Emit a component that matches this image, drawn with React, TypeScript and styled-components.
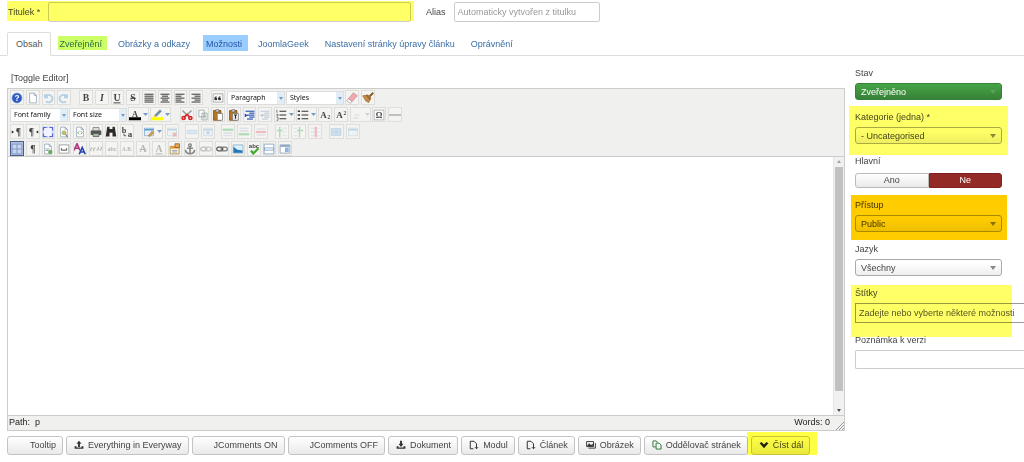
import React from "react";
import styled, { createGlobalStyle, css } from "styled-components";

const Global = createGlobalStyle`
  *, *::before, *::after { box-sizing: border-box; }
  body {
    margin: 0;
    overflow-x: hidden;
    background: #fff;
    color: #444;
    font: 9px/12px "Liberation Sans", Arial, sans-serif;
  }
  button, input, select, textarea { font: inherit; color: inherit; margin: 0; }
`;

const Page = styled.main`
  padding-top: 2px;
`;

/* Translucent marker pen laid over a control */
const Marker = styled.span<{ $inset: string; $color: string }>`
  position: absolute;
  inset: ${(p) => p.$inset};
  background: ${(p) => p.$color};
  mix-blend-mode: multiply;
  pointer-events: none;
`;

const TitleBar = styled.div`
  display: flex;
  align-items: center;
  padding-left: 8px;
`;

const TitleField = styled.div<{ $width: string }>`
  position: relative;
  display: flex;
  align-items: center;
  gap: 8px;
  width: ${(p) => p.$width};
  margin-right: 15px;
  white-space: nowrap;
`;

const TextInput = styled.input`
  flex: 1;
  min-width: 0;
  width: 100%;
  height: 20px;
  padding: 0 3px;
  border: 1px solid #ccc;
  border-radius: 2px;
  background: #fff;
  &::placeholder { color: #999; opacity: 1; }
`;

const Tabs = styled.nav`
  display: flex;
  height: 34px;
  margin-bottom: 11px;
  padding: 10px 0 0 7px;
  border-bottom: 1px solid #ddd;
`;

const Tab = styled.a<{ $active?: boolean }>`
  position: relative;
  height: 24px;
  padding: 6px 8px;
  color: #3a6ea5;
  text-decoration: none;
  white-space: nowrap;
  ${(p) =>
    p.$active &&
    css`
      padding: 5px 7px 5px 8px;
      margin-right: 1px;
      border: 1px solid #ddd;
      border-bottom-color: #fff;
      border-radius: 2px 2px 0 0;
      background: #fff;
      color: #555;
    `}
`;

const Content = styled.div`
  display: flex;
  align-items: flex-start;
  gap: 10px;
  padding-left: 7px;
`;

const EditorColumn = styled.section`
  flex: 1;
  min-width: 0;
`;

const ToggleLink = styled.button`
  display: block;
  height: 12px;
  margin: 5px 0 4px;
  padding: 0 4px;
  border: 0;
  background: none;
`;

const Editor = styled.div`
  border: 1px solid #ccc;
  background: #fff;
`;

const Toolbar = styled.div`
  padding: 0 1px;
  height: 68px;
  background: #f0f0ee;
  border-bottom: 1px solid #ccc;
  color: #222;
`;

const ToolRow = styled.div`
  display: flex;
  height: 17px;
  align-items: center;
`;

const ToolGroup = styled.div<{ $width: number; $before?: number }>`
  display: flex;
  flex: none;
  width: ${(p) => p.$width}px;
  margin-left: ${(p) => p.$before ?? 0}px;
`;

const ToolButton = styled.button<{ $off?: boolean; $on?: boolean }>`
  flex: 1 1 0;
  min-width: 0;
  height: 15px;
  margin: 0 1px;
  padding: 0;
  display: flex;
  align-items: center;
  justify-content: center;
  border: 1px solid ${(p) => (p.$on ? "#4a5c8c" : "#dededb")};
  background: ${(p) => (p.$on ? "#b4c2dd" : "#f4f4f2")};
  svg { flex: none; opacity: ${(p) => (p.$off ? 0.35 : 1)}; }
`;

const ToolSelectBox = styled.span`
  position: relative;
  flex: none;
  width: 58px;
  height: 14px;
  margin: 0 0 0 1px;
`;

const ToolSelect = styled.select`
  appearance: none;
  display: block;
  width: 100%;
  height: 14px;
  padding: 0 3px;
  border: 1px solid #ddd;
  background: linear-gradient(to right, #fff calc(100% - 7px), #e3edf5 calc(100% - 7px));
  color: #111;
  font: 7px/12px "Noto Sans", "Open Sans", sans-serif;
`;

const SelectTick = styled.span<{ $color: string; $right: number }>`
  position: absolute;
  top: 50%;
  right: ${(p) => p.$right}px;
  margin-top: -2px;
  border: 3px solid transparent;
  border-top: 4px solid ${(p) => p.$color};
  border-bottom: 0;
  pointer-events: none;
`;

const ToolTick = styled(SelectTick)`
  border-width: 3px 2px 0;
  margin-top: -1px;
`;

const Canvas = styled.div`
  display: flex;
  height: 258px;
`;

const WritingArea = styled.textarea`
  flex: 1;
  padding: 6px;
  border: 0;
  outline: 0;
  resize: none;
`;

const Scrollbar = styled.div`
  display: flex;
  flex-direction: column;
  align-items: center;
  width: 11px;
  padding: 3px 0;
  background: #f1f1f1;
  border-left: 1px solid #e6e6e6;
`;

const ScrollThumb = styled.div`
  flex: 1;
  width: 8px;
  margin: 4px 0 18px;
  background: #c1c1c1;
`;

const ScrollArrow = styled.i<{ $down?: boolean }>`
  border: 2px solid transparent;
  ${(p) =>
    p.$down
      ? "border-top: 3px solid #505050; border-bottom: 0;"
      : "border-bottom: 3px solid #a3a3a3; border-top: 0;"}
`;

const StatusBar = styled.div`
  display: flex;
  justify-content: space-between;
  height: 15px;
  padding: 0 0 0 1px;
  border-top: 1px solid #ccc;
  background: #f0f0ee;
  color: #222;
`;

const WordCount = styled.span`
  display: flex;
  align-items: flex-start;
  gap: 6px;
  svg { align-self: flex-end; }
`;

const InsertBar = styled.div`
  display: flex;
  flex-wrap: wrap;
  gap: 3px;
  margin-top: 5px;
`;

const InsertButton = styled.button<{ $indent?: number }>`
  position: relative;
  display: flex;
  align-items: center;
  gap: 4px;
  height: 19px;
  padding: 0 6px 1px ${(p) => p.$indent ?? 7}px;
  border: 1px solid #c4c4c4;
  border-radius: 3px;
  background: linear-gradient(#fff, #e9e9e9);
  white-space: nowrap;
`;

const Aside = styled.aside`
  flex: 0 0 169px;
  display: flex;
  flex-direction: column;
  gap: 11px;
`;

const Field = styled.div<{ $full?: boolean }>`
  position: relative;
  display: flex;
  flex-direction: column;
  gap: 4px;
  width: ${(p) => (p.$full ? "100%" : "147px")};
`;

const SelectBox = styled.span`
  position: relative;
  display: block;
`;

const Select = styled.select<{ $green?: boolean }>`
  appearance: none;
  display: block;
  width: 100%;
  height: 17px;
  padding: 0 5px;
  border: 1px solid ${(p) => (p.$green ? "#378137" : "#aaa")};
  border-radius: 3px;
  background: ${(p) =>
    p.$green ? "linear-gradient(#46a546, #378137)" : "linear-gradient(#fff 20%, #eee)"};
  color: ${(p) => (p.$green ? "#fff" : "#444")};
`;

const Switch = styled.fieldset`
  display: flex;
  width: 147px;
  margin: 0;
  padding: 0;
  border: 0;
  legend { padding: 0; margin-bottom: 6px; }
`;

const SwitchOption = styled.label<{ $chosen?: boolean }>`
  flex: 1;
  height: 15px;
  line-height: 13px;
  text-align: center;
  border: 1px solid ${(p) => (p.$chosen ? "#802020" : "#bbb")};
  border-radius: ${(p) => (p.$chosen ? "0 3px 3px 0" : "3px 0 0 3px")};
  background: ${(p) => (p.$chosen ? "#942a25" : "linear-gradient(#fff, #e9e9e9)")};
  color: ${(p) => (p.$chosen ? "#fff" : "#444")};
  input { position: absolute; opacity: 0; pointer-events: none; }
`;

const WideInput = styled(TextInput)<{ $dark?: boolean }>`
  flex: none;
  border-right: 0;
  border-color: ${(p) => (p.$dark ? "#999" : "#ccc")};
  border-radius: ${(p) => (p.$dark ? "0" : "2px 0 0 2px")};
  height: ${(p) => (p.$dark ? 20 : 19)}px;
  &::placeholder { color: ${(p) => (p.$dark ? "#555" : "#999")}; }
`;

/* ---- toolbar drawings, on a 16 unit grid ---- */

const letter = (t: string, extra: React.SVGProps<SVGTextElement> = {}) => (
  <text x="8" y="12.5" textAnchor="middle" fontFamily="Liberation Serif, serif" fontSize="13" fontWeight="bold" fill="#444" {...extra}>
    {t}
  </text>
);
const lines = (xs: number[][], color = "#555") => (
  <g stroke={color} strokeWidth="1.6">
    {xs.map(([a, b], i) => (
      <path key={i} d={`M${a} ${3 + i * 2.6}H${b}`} />
    ))}
  </g>
);
const sheet = <path d="M3.5 1.5h6l3 3v10h-9z M9.5 1.5v3h3" fill="#fff" stroke="#8ea0b0" />;
const grid = (
  <>
    <path d="M2 3h12v10H2z" fill="#e5f1fa" stroke="#7aa7cc" />
    <path d="M2 5h12" stroke="#5c9bd0" strokeWidth="2" />
  </>
);
const clip = (
  <>
    <path d="M2 2h10v13H2z" fill="#b9741f" stroke="#7c4a10" />
    <path d="M5 1h4v3H5z" fill="#ddd" stroke="#666" />
  </>
);

const art: Record<string, React.ReactNode> = {
  help: (
    <>
      <circle cx="8" cy="8" r="6.5" fill="#2c5bc4" stroke="#5c7fce" />
      {letter("?", { fill: "#fff", fontSize: 11, y: 12, fontFamily: "Liberation Sans" })}
    </>
  ),
  page: sheet,
  undo: <path d="M4 3v4h4M4.500 6.500a5 5 0 1 1 1 6" fill="none" stroke="#3d8fd0" strokeWidth="2.500" />,
  redo: <path d="M12 3v4H8M11.500 6.500a5 5 0 1 0-1 6" fill="none" stroke="#3d8fd0" strokeWidth="2.500" />,
  bold: letter("B"),
  italic: letter("I", { fontStyle: "italic" }),
  underline: letter("U", { textDecoration: "underline" }),
  strike: letter("S", { textDecoration: "line-through" }),
  full: lines([[2, 14], [2, 14], [2, 14], [2, 14], [2, 14]]),
  center: lines([[2, 14], [4, 12], [2, 14], [4, 12], [2, 14]]),
  left: lines([[2, 14], [2, 10], [2, 14], [2, 10], [2, 14]]),
  right: lines([[2, 14], [6, 14], [2, 14], [6, 14], [2, 14]]),
  quote: (
    <>
      <path d="M1.500 2.500h13v11h-13z" fill="#fafafa" stroke="#999" />
      <path d="M7 5Q3 6 3 9a2 2 0 1 0 2-2zM12 5Q8 6 8 9a2 2 0 1 0 2-2z" fill="#333" />
    </>
  ),
  eraser: (
    <g stroke="#a88" strokeWidth=".8">
      <path d="M10 1 15 5 8 13 3 9z" fill="#f3a7ae" />
      <path d="M3 9 8 13 6 15 1 12z" fill="#fff" />
    </g>
  ),
  broom: (
    <>
      <path d="M15 1 9 7" stroke="#8a5a20" strokeWidth="2.500" />
      <path d="M1 5 8 4 12 8 9 14 5 12z" fill="#c48a45" stroke="#9d7240" />
      <path d="M6 4 11 10" stroke="#7b5a32" strokeWidth="1.500" />
    </>
  ),
  fore: (
    <>
      {letter("A", { y: 10, fontSize: 11 })}
      <path d="M0 11h16v4H0z" fill="#000" />
    </>
  ),
  back: (
    <>
      <path d="M5 8 12 1l2 2-7 7z" fill="#6a8fb5" stroke="#777" strokeWidth=".6" />
      <path d="M3 10 5 8l2 2z" fill="#e6a800" />
      <path d="M0 11h16v4H0z" fill="#ff0" />
    </>
  ),
  cut: (
    <>
      <path d="M2 2 12 12M14 2 4 12" stroke="#999" strokeWidth="2" />
      <g fill="none" stroke="#d22" strokeWidth="2.200"><circle cx="3.500" cy="12" r="2" /><circle cx="12.500" cy="12" r="2" /></g>
      <path d="M5 10 8 7l3 3" stroke="#d22" strokeWidth="2" fill="none" />
    </>
  ),
  copy: <path d="M2.500 1.500h7v9h-7zM6.500 5.500h7v9h-7zM8 8h4M8 10h4M8 12h4" fill="#fff" stroke="#8aa09a" />,
  paste: <>{clip}<path d="M7 6h7v9H7z" fill="#fff" stroke="#777" /></>,
  pasteText: <>{clip}<path d="M6 6h8v9H6z" fill="#eee" stroke="#777" /><path d="M8 8h4M10 8v5" stroke="#222" strokeWidth="1.500" /></>,
  indent: <>{lines([[2, 14], [7, 14], [4, 14], [7, 14], [4, 12]], "#3459b5")}<path d="M1 6v5l4-2.500z" fill="#2244bb" /></>,
  outdent: <>{lines([[2, 14], [7, 14], [4, 14], [7, 14], [4, 12]], "#7088bb")}<path d="M5 6v5L1 8.500z" fill="#678" /></>,
  ol: <><path d="M6 3h9M6 8h9M6 13h9" stroke="#333" strokeWidth="1.500" /><path d="M2.500 1v4M2 7h2v2H2M2 11h2v4H2" fill="none" stroke="#555" /></>,
  ul: <><path d="M6 3h9M6 8h9M6 13h9" stroke="#333" strokeWidth="1.500" /><path d="M1 2h3v2H1zM1 7h3v2H1zM1 12h3v2H1z" fill="#333" /></>,
  sub: <>{letter("A", { x: 6, y: 12, fontSize: 12 })}{letter("2", { x: 13, y: 13, fontSize: 7 })}</>,
  sup: <>{letter("A", { x: 6, y: 12, fontSize: 12 })}{letter("2", { x: 13, y: 8, fontSize: 7 })}</>,
  omega: <><path d="M1.500 1.500h13v13h-13z" fill="#fafafa" stroke="#aaa" />{letter("Ω", { fontSize: 11, y: 12 })}</>,
  rule: <path d="M0 8h16" stroke="#888" strokeWidth="1.300" />,
  ltr: <>{letter("¶", { x: 10 })}<path d="M1 6v4l3-2z" fill="#222" /></>,
  rtl: <>{letter("¶", { x: 6 })}<path d="M15 6v4l-3-2z" fill="#222" /></>,
  fullscreen: <><path d="M1.500 1.500h13v13h-13z" fill="#f0f4ff" stroke="#8c9bea" strokeDasharray="3 1" /><path d="M2 6V2h4M10 2h4v4M14 10v4h-4M6 14H2v-4" fill="none" stroke="#5565d8" strokeWidth="1.600" /></>,
  preview: <>{sheet}<circle cx="8" cy="9" r="2.500" fill="#d9bd55" stroke="#8aa466" /><path d="M10 11l3 4" stroke="#777" strokeWidth="1.500" /></>,
  source: <>{sheet}<path d="M7 7 5 9l2 2M9 7l2 2-2 2" fill="none" stroke="#6c9a70" strokeWidth="1.200" /></>,
  print: <><path d="M4 2h8v5H4z" fill="#ddd" stroke="#777" /><path d="M1 6h14v6H1z" fill="#555" /><path d="M4 10h8v4H4z" fill="#a8bca8" stroke="#555" /></>,
  find: <path d="M3 1h3v3h4V1h3l2 13h-5V9H6v5H1z" fill="#2b2b2b" />,
  replace: <>{letter("b", { x: 4, y: 9, fontSize: 11 })}{letter("a", { x: 12, y: 14, fontSize: 12 })}<path d="M4 10v3h3" fill="none" stroke="#333" /></>,
  table: <>{grid}<path d="M7 13 12 7l2 2-5 5z" fill="#e9a43a" stroke="#8a5a20" strokeWidth=".7" /></>,
  tableDrop: <>{grid}<path d="M9 9l5 5M14 9l-5 5" stroke="#d33" strokeWidth="2" /></>,
  rowProps: <path d="M1.500 5.500h13v5h-13zM5.500 5.500v5M10.500 5.500v5" fill="#bcdcf3" stroke="#7aa7cc" />,
  cellProps: <>{grid}<path d="M6 7h4v4H6z" fill="#5c9bd0" /></>,
  rowUp: <><path d="M2 9.500h12M2 13h12" stroke="#9ac" strokeWidth="1.500" /><path d="M1 5h14" stroke="#2eaf45" strokeWidth="3" /></>,
  rowDown: <><path d="M2 3h12M2 6.500h12" stroke="#9ac" strokeWidth="1.500" /><path d="M1 11h14" stroke="#2eaf45" strokeWidth="3" /></>,
  rowCut: <><path d="M2 4h12M2 12h12" stroke="#9ac" strokeWidth="1.500" /><path d="M1 8h14" stroke="#e0506c" strokeWidth="3" /></>,
  colLeft: <><path d="M9 3h5M9 8h5M9 13h5" stroke="#9ac" /><path d="M5 1v14M1 6h8" stroke="#2eaf45" strokeWidth="2" /></>,
  colRight: <><path d="M2 3h5M2 8h5M2 13h5" stroke="#9ac" /><path d="M10 1v14M7 6h8" stroke="#2eaf45" strokeWidth="2" /></>,
  colCut: <><path d="M2 3h12M2 8h12M2 13h12" stroke="#9ac" /><path d="M9 1v14" stroke="#e0506c" strokeWidth="3" /></>,
  split: <path d="M1.500 3.500h13v9h-13zM8 3.500v9M1.500 8h13" fill="#8fc0ea" stroke="#4c8bc8" />,
  merge: grid,
  guides: <path d="M1.500 1.500h13v13h-13zM8 1.500v13M1.500 8h13" fill="#c9d6ec" stroke="#7f98c6" strokeWidth="1.300" />,
  pilcrow: letter("¶"),
  template: <>{sheet}<path d="M5 8h5M5 10h3" stroke="#689" /><circle cx="11" cy="12" r="3" fill="#73a96d" /></>,
  nbsp: <><path d="M1.500 2.500h13v11h-13z" fill="#fff" stroke="#888" /><path d="M4.500 7v2.500h7V7" stroke="#444" strokeWidth="1.300" fill="none" /></>,
  style: (
    <g fill="none" strokeWidth="2.200">
      <path d="M0 10 4 1l4 9M2 7h4" stroke="#b0327c" />
      <path d="M7 15l4-9 4 9M9 12h4" stroke="#2745b5" />
    </g>
  ),
  cite: <path d="M3 6 1 8v3M7 6 5 8v3M11 5v3l-2 2M15 5v3l-2 2" fill="none" stroke="#555" strokeWidth="1.600" />,
  abbr: letter("abc", { fontSize: 8, y: 10 }),
  acronym: letter("A.B.", { fontSize: 7, y: 10 }),
  del: letter("A", { textDecoration: "line-through" }),
  ins: letter("A", { textDecoration: "underline" }),
  attribs: <><path d="M1.500 4.500h12v10h-12z" fill="#fff3d5" stroke="#a77a31" /><path d="M2 6h11" stroke="#e49b2f" strokeWidth="3" /><path d="M8 1h6v5H8z" fill="#e8a85a" stroke="#8a5a20" /><path d="M4 10h7M4 12h7" stroke="#7191bd" /></>,
  anchor: <><circle cx="8" cy="3" r="1.800" fill="none" stroke="#777" strokeWidth="1.500" /><path d="M8 5v9M4 7h8M2 9c0 7 12 7 12 0" fill="none" stroke="#888" strokeWidth="2.200" /></>,
  chain: <><rect x="1" y="5.500" width="8" height="5" rx="2.500" fill="none" stroke="#555" strokeWidth="1.700" /><rect x="7" y="5.500" width="8" height="5" rx="2.500" fill="none" stroke="#777" strokeWidth="1.700" /></>,
  image: <><path d="M1.500 2.500h13v11h-13z" fill="#d9effc" stroke="#8ab" /><path d="M2 13V5l5 4 7 1v3z" fill="#2176b5" /></>,
  spell: <>{letter("abc", { y: 6, fontSize: 8, fontFamily: "Liberation Sans" })}<path d="M4 10l3 4 7-7" fill="none" stroke="#43a832" strokeWidth="3" /></>,
  pagebreak: <path d="M1.500 1.500h13v13h-13zM2 6.500h12v3H2z" fill="#fff" stroke="#7199bd" />,
  layer: <><path d="M1.500 2.500h13v11h-13z" fill="#fff" stroke="#7a94b5" /><path d="M2 4h12" stroke="#7a94b5" strokeWidth="2" /><path d="M8 6h5v6H8z" fill="#8fb3df" /></>,
  blank: <path d="M3 12h7M5 8h6" stroke="#999" strokeWidth="1.500" />,
};

const Icon = ({ name }: { name: string }) => (
  <svg width="12" height="12" viewBox="0 0 16 16" aria-hidden="true">
    {art[name]}
  </svg>
);

/* Names ending in "-" are disabled, "+" pressed */
const Tools = ({ names, width, before }: { names: string; width: number; before?: number }) => (
  <ToolGroup $width={width} $before={before}>
    {names.split(" ").map((n, i) => {
      const name = n.replace(/[-+]$/, "");
      return (
        <ToolButton key={i} type="button" aria-label={name} $off={n.endsWith("-")} $on={n.endsWith("+")}>
          <Icon name={name} />
        </ToolButton>
      );
    })}
  </ToolGroup>
);

const SplitButton = styled(ToolButton)<{ $before?: number }>`
  flex: none;
  width: 21px;
  margin: 0 0 0 ${(p) => p.$before ?? 1}px;
  gap: 2px;
`;

const SplitTool = ({ name, off, before }: { name: string; off?: boolean; before?: number }) => (
  <SplitButton type="button" aria-label={name} $off={off} $before={before}>
    <Icon name={name} />
    <svg width="5" height="3" viewBox="0 0 5 3" aria-hidden="true">
      <path d="M0 0h5L2.500 3z" fill="#6f9cc8" />
    </svg>
  </SplitButton>
);

const ToolDropdown = ({ label }: { label: string }) => (
  <ToolSelectBox>
    <ToolSelect aria-label={label}>
      <option>{label}</option>
    </ToolSelect>
    <ToolTick $color="#6f9cc8" $right={2} />
  </ToolSelectBox>
);

const SelectField = ({ id, label, value, green, children }: { id: string; label: string; value: string; green?: boolean; children?: React.ReactNode }) => (
  <Field>
    <label htmlFor={id}>{label}</label>
    <SelectBox>
      <Select id={id} $green={green}>
        <option>{value}</option>
      </Select>
      <SelectTick $color={green ? "#5d9f5d" : "#888"} $right={6} />
    </SelectBox>
    {children}
  </Field>
);

const smallArt: Record<string, React.ReactNode> = {
  upload: <path d="M8 1l4 5H9.500v5h-3V6H4zM1 10h3v2h8v-2h3v4H1z" fill="#333" />,
  download: <path d="M6.500 1h3v5H12l-4 5-4-5h2.500zM1 10h3v2h8v-2h3v4H1z" fill="#333" />,
  file: <path d="M7 14H2V2h6l4 4v8M9.500 11.500 12 14l2.500-2.500" fill="none" stroke="#333" strokeWidth="1.600" />,
  picture: <><path d="M1 2.500h11v8H1zM4 13h11V5" fill="none" stroke="#333" strokeWidth="1.500" /><path d="M2 9l3-4 3 3 3-2v4H2z" fill="#333" /></>,
  pages: <path d="M6 11H1.500V1.500H7L9 4M6.500 5h5l3 3v6.500h-8z" fill="none" stroke="#3a7a45" strokeWidth="1.600" />,
  chevron: <path d="M1 5l3-2 4 4 4-4 3 2-7 8z" fill="#222" />,
};

const inserts: { label: string; icon?: string; indent?: number; marked?: boolean }[] = [
  { label: "Tooltip", indent: 22 },
  { label: "Everything in Everyway", icon: "upload" },
  { label: "JComments ON", indent: 21 },
  { label: "JComments OFF", indent: 21 },
  { label: "Dokument", icon: "download" },
  { label: "Modul", icon: "file" },
  { label: "Článek", icon: "file" },
  { label: "Obrázek", icon: "picture" },
  { label: "Oddělovač stránek", icon: "pages" },
  { label: "Číst dál", icon: "chevron", marked: true },
];

export default function App() {
  return (
    <Page>
      <Global />
      <TitleBar>
        <TitleField $width="403px">
          <label htmlFor="title">Titulek *</label>
          <TextInput id="title" />
          <Marker $inset="-1px -3px 1px -1px" $color="#ffff66" />
        </TitleField>
        <TitleField $width="174px">
          <label htmlFor="alias">Alias</label>
          <TextInput id="alias" placeholder="Automaticky vytvořen z titulku" />
        </TitleField>
      </TitleBar>

      <Tabs>
        <Tab href="#obsah" $active>Obsah</Tab>
        <Tab href="#zverejneni">Zveřejnění<Marker $inset="4px 3px 6px 6px" $color="#ccff66" /></Tab>
        <Tab href="#obrazky">Obrázky a odkazy</Tab>
        <Tab href="#moznosti">Možnosti<Marker $inset="3px 2px 5px 5px" $color="#99ccff" /></Tab>
        <Tab href="#joomlageek">JoomlaGeek</Tab>
        <Tab href="#nastaveni">Nastavení stránky úpravy článku</Tab>
        <Tab href="#opravneni">Oprávnění</Tab>
      </Tabs>

      <Content>
        <EditorColumn>
          <ToggleLink type="button">[Toggle Editor]</ToggleLink>
          <Editor>
            <Toolbar>
              <ToolRow>
                <Tools width={63} names="help page undo- redo-" />
                <Tools width={126} before={6} names="bold italic underline strike full center left right" />
                <Tools width={16} before={6} names="quote" />
                <ToolDropdown label="Paragraph" />
                <ToolDropdown label="Styles" />
                <Tools width={32} names="eraser broom" />
              </ToolRow>
              <ToolRow>
                <ToolDropdown label="Font family" />
                <ToolDropdown label="Font size" />
                <SplitTool name="fore" />
                <SplitTool name="back" />
                <Tools width={94} before={8} names="cut copy paste pasteText indent outdent-" />
                <SplitTool name="ol" />
                <SplitTool name="ul" />
                <Tools width={32} names="sub sup" />
                <SplitTool name="blank" off />
                <Tools width={32} names="omega rule" />
              </ToolRow>
              <ToolRow>
                <Tools width={126} names="ltr rtl fullscreen preview source print find replace" />
                <SplitTool name="table" before={7} />
                <Tools width={16} before={1} names="tableDrop-" />
                <Tools width={32} before={4} names="rowProps- cellProps-" />
                <Tools width={49} before={4} names="rowUp- rowDown- rowCut-" />
                <Tools width={49} before={5} names="colLeft- colRight- colCut-" />
                <Tools width={33} before={5} names="split- merge-" />
              </ToolRow>
              <ToolRow>
                <Tools
                  width={284}
                  names="guides+ pilcrow template nbsp style cite- abbr- acronym- del- ins- attribs anchor chain- chain image spell pagebreak layer"
                />
              </ToolRow>
            </Toolbar>
            <Canvas>
              <WritingArea aria-label="Obsah" />
              <Scrollbar>
                <ScrollArrow />
                <ScrollThumb />
                <ScrollArrow $down />
              </Scrollbar>
            </Canvas>
            <StatusBar>
              <span>Path:&nbsp; p</span>
              <WordCount>
                Words: 0
                <svg width="8" height="8" viewBox="0 0 8 8" aria-hidden="true">
                  <path d="M0 8 8 0M3 8l5-5M6 8l2-2" stroke="#999" />
                </svg>
              </WordCount>
            </StatusBar>
          </Editor>
          <InsertBar>
            {inserts.map((b) => (
              <InsertButton key={b.label} type="button" $indent={b.indent}>
                {b.icon && (
                  <svg width="10" height="10" viewBox="0 0 16 16" aria-hidden="true">
                    {smallArt[b.icon]}
                  </svg>
                )}
                {b.label}
                {b.marked && <Marker $inset="-5px -8px -4px -5px" $color="#ffff44" />}
              </InsertButton>
            ))}
          </InsertBar>
        </EditorColumn>

        <Aside>
          <SelectField id="stav" label="Stav" value="Zveřejněno" green />
          <SelectField id="kategorie" label="Kategorie (jedna) *" value="- Uncategorised">
            <Marker $inset="-5px -6px -11px -6px" $color="#ffff66" />
          </SelectField>
          <Switch>
            <legend>Hlavní</legend>
            <SwitchOption><input type="radio" name="hlavni" />Ano</SwitchOption>
            <SwitchOption $chosen><input type="radio" name="hlavni" defaultChecked />Ne</SwitchOption>
          </Switch>
          <SelectField id="pristup" label="Přístup" value="Public">
            <Marker $inset="-4px -5px -8px -4px" $color="#ffcc00" />
          </SelectField>
          <SelectField id="jazyk" label="Jazyk" value="Všechny" />
          <Field $full>
            <label htmlFor="stitky">Štítky</label>
            <WideInput id="stitky" $dark placeholder="Zadejte nebo vyberte některé možnosti" />
            <Marker $inset="-2px 12px -14px -4px" $color="#ffff66" />
          </Field>
          <Field $full>
            <label htmlFor="poznamka">Poznámka k verzi</label>
            <WideInput id="poznamka" />
          </Field>
        </Aside>
      </Content>
    </Page>
  );
}
